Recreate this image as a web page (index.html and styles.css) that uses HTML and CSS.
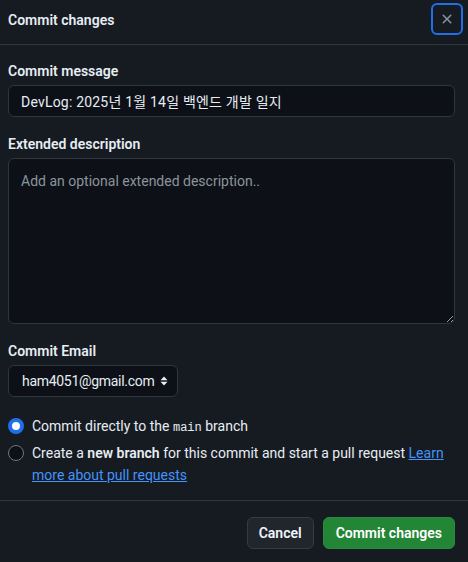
FILE: index.html
```html
<!DOCTYPE html>
<html lang="ko">
<head>
<meta charset="utf-8">
<title>Commit changes</title>
<link rel="stylesheet" href="styles.css">
</head>
<body>
<div class="dialog">
  <header class="dialog-header">
    <h1 class="dialog-title">Commit changes</h1>
    <button class="close-btn" type="button" aria-label="Close">
      <svg viewBox="0 0 16 16" width="16" height="16"><path fill="currentColor" d="M3.72 3.72a.75.75 0 0 1 1.06 0L8 6.94l3.22-3.22a.749.749 0 0 1 1.275.326.749.749 0 0 1-.215.734L9.06 8l3.220 3.22a.749.749 0 0 1-.326 1.275.749.749 0 0 1-.734-.215L8 9.06l-3.22 3.22a.751.751 0 0 1-1.042-.018.751.751 0 0 1-.018-1.042L6.94 8 3.72 4.78a.75.75 0 0 1 0-1.06Z"/></svg>
    </button>
  </header>
  <div class="dialog-body">
    <div class="field">
      <label class="label" for="msg">Commit message</label>
      <input class="input" id="msg" type="text" value="DevLog: 2025년 1월 14일 백엔드 개발 일지">
    </div>
    <div class="field">
      <label class="label" for="desc">Extended description</label>
      <textarea class="textarea" id="desc" placeholder="Add an optional extended description.."></textarea>
    </div>
    <div class="field">
      <label class="label" for="email">Commit Email</label>
      <div class="select">
        <span class="select-text">ham4051@gmail.com</span>
        <svg class="select-arrow" viewBox="0 0 8 12" width="8" height="12"><path fill="currentColor" d="M4 1.5 7.5 5.2h-7Z M4 10.5 .5 6.8h7Z"/></svg>
      </div>
    </div>
    <div class="radios">
      <div class="radio-row">
        <span class="radio checked"></span>
        <span class="radio-label">Commit directly to the <code class="mono">main</code> branch</span>
      </div>
      <div class="radio-row">
        <span class="radio"></span>
        <span class="radio-label">Create a <strong>new branch</strong> for this commit and start a pull request <a class="link" href="#">Learn more about pull requests</a></span>
      </div>
    </div>
  </div>
  <footer class="dialog-footer">
    <button class="btn btn-default" type="button">Cancel</button>
    <button class="btn btn-primary" type="button">Commit changes</button>
  </footer>
</div>
</body>
</html>
```
FILE: styles.css
```css
* { box-sizing: border-box; }
html, body {
  margin: 0;
  background: #161b22;
}
body {
  font-family: Roboto, "Noto Sans CJK KR", sans-serif;
  font-size: 14px;
  line-height: 20px;
  color: #e6edf3;
}
.dialog {
  width: 468px;
  min-height: 562px;
  background: #161b22;
}
.dialog-header {
  height: 45px;
  display: flex;
  align-items: flex-start;
  justify-content: space-between;
  padding: 0 5px 0 8px;
  border-bottom: 1px solid #30363d;
}
.dialog-title {
  margin: 10px 0 0;
  font-size: 14px;
  font-weight: 600;
  line-height: 20px;
}
.close-btn {
  margin-top: 3px;
  width: 32px;
  height: 32px;
  display: flex;
  align-items: center;
  justify-content: center;
  background: transparent;
  border: 2px solid #1f6feb;
  border-radius: 6px;
  color: #8b949e;
  padding: 0;
}
.dialog-body {
  padding: 16px 13px 0 8px;
  display: flex;
  flex-direction: column;
  gap: 17px;
}
.field {
  display: flex;
  flex-direction: column;
  gap: 4px;
}
.label {
  font-weight: 600;
}
.input, .textarea, .select {
  background: #0d1117;
  border: 1px solid #30363d;
  border-radius: 6px;
  color: #e6edf3;
  font-family: inherit;
  font-size: 14px;
}
.input {
  height: 32px;
  padding: 0 12px;
  width: 100%;
  letter-spacing: 0.2px;
}
.textarea {
  height: 166px;
  width: 100%;
  padding: 12px 12px;
  line-height: 20px;
  resize: vertical;
}
.textarea::placeholder { color: #8b949e; }
.select {
  width: 170px;
  height: 32px;
  display: flex;
  align-items: center;
  justify-content: space-between;
  padding: 0 9px 0 13px;
}
.select-text { letter-spacing: -0.3px; }
.select-arrow { color: #e6edf3; }
.radios {
  display: flex;
  flex-direction: column;
  gap: 5px;
  margin-top: 1px;
}
.radio-row {
  display: flex;
  align-items: flex-start;
  gap: 8px;
}
.radio {
  flex: none;
  width: 16px;
  height: 16px;
  margin-top: 3px;
  border-radius: 50%;
  border: 1px solid #6e7681;
  background: #0d1117;
}
.radio.checked {
  border: 4px solid #1f6feb;
  background: #ffffff;
}
.radio-label { line-height: 22px; }
.mono {
  font-family: "Liberation Mono", monospace;
  font-size: 12px;
  line-height: 1;
}
strong { font-weight: 600; }
.link { color: #4493f8; text-decoration: underline; }
.dialog-footer {
  border-top: 1px solid #30363d;
  margin-top: 14px;
  padding: 16px 13px 16px 8px;
  display: flex;
  justify-content: flex-end;
  gap: 9px;
}
.btn {
  height: 32px;
  padding: 0 12px;
  border-radius: 6px;
  font-family: inherit;
  font-size: 14px;
  font-weight: 600;
  color: #f0f6fc;
}
.btn-default {
  background: #21262d;
  border: 1px solid #363b42;
  padding: 0 11px;
}
.btn-primary {
  background: #238636;
  border: 1px solid #2b8a3e;
  color: #ffffff;
}
```
